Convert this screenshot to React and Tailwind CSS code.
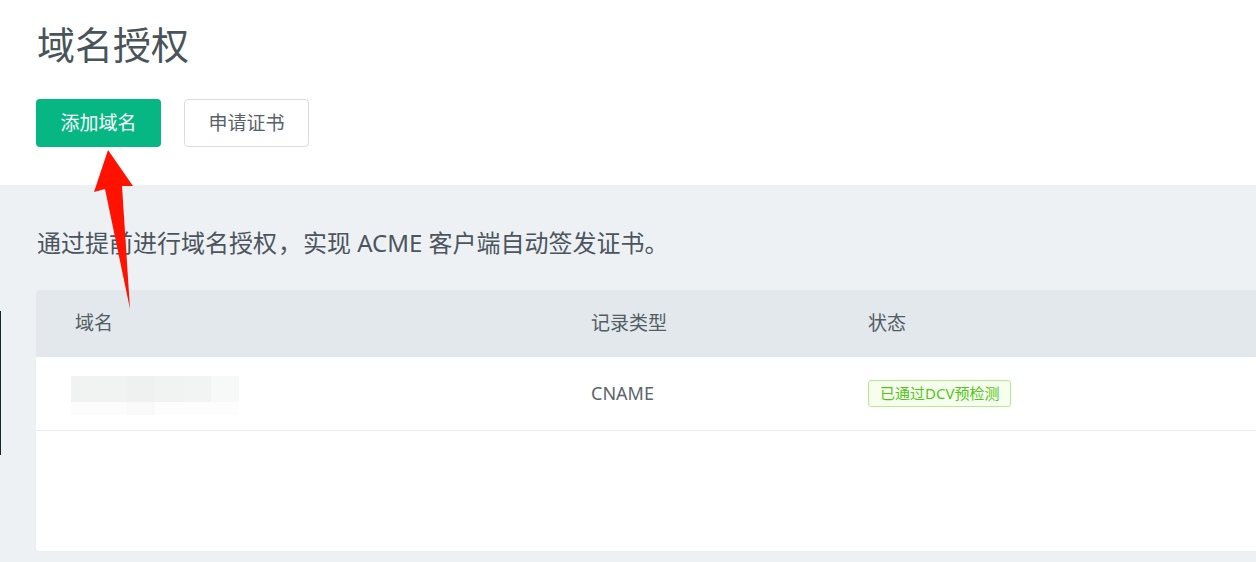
import React from 'react';

const font = "font-['Noto_Sans','Noto_Sans_CJK_SC',sans-serif]";

const BlurredDomain = () => (
  <div className="flex flex-col">
    <div className="flex h-[26px]">
      <div className="w-[56px] bg-[#f1f2f2]" />
      <div className="w-[28px] bg-[#eff1f1]" />
      <div className="w-[28px] bg-[#f1f2f2]" />
      <div className="w-[28px] bg-[#f2f3f3]" />
      <div className="w-[28px] bg-[#f7f8f8]" />
    </div>
    <div className="flex h-[13px]">
      <div className="w-[56px] bg-[#fcfcfc]" />
      <div className="w-[28px] bg-[#f9f9f9]" />
      <div className="w-[84px] bg-[#fdfdfd]" />
    </div>
  </div>
);

export default function App() {
  return (
    <div className={`relative w-full h-[562px] overflow-hidden bg-white ${font}`}>
      {/* Header */}
      <div className="px-[36px] pt-[25px] pb-[38px]">
        <h1 className="text-[38px] leading-none text-[#48545a] pl-px">域名授权</h1>
        <div className="flex gap-[23px] mt-[36px]">
          <button className="w-[125px] h-[48px] rounded-[4px] bg-[#07b783] text-white text-[19px]">添加域名</button>
          <button className="w-[125px] h-[48px] rounded-[4px] bg-white border border-[#d8dcdf] text-[#56616a] text-[19px]">申请证书</button>
        </div>
      </div>

      {/* Content */}
      <div className="bg-[#edf1f4] pl-[36px] pt-[43px] pb-[11px]">
        <p className="text-[24px] leading-[30px] text-[#4c555d] pl-px">
          通过提前进行域名授权<span className="inline-block w-[26px] text-center">，</span>实现 ACME 客户端自动签发证书。
        </p>

        <div className="mt-[32px] h-[261px] bg-white rounded-l-[4px] overflow-hidden">
          <div className="grid grid-cols-[516px_277px_1fr] h-[67px] bg-[#e3e8ec] items-center text-[19px] text-[#525d64]">
            <div className="pl-[39px]">域名</div>
            <div className="pl-[39px]">记录类型</div>
            <div className="pl-[39px]">状态</div>
          </div>
          <div className="grid grid-cols-[516px_277px_1fr] h-[74px] border-b border-[#ececec] items-center">
            <div className="pl-[35px] pt-[3px]"><BlurredDomain /></div>
            <div className="pl-[39px] text-[18px] text-[#5a656d]">CNAME</div>
            <div className="pl-[39px]">
              <span className="inline-flex items-center h-[27px] px-[11px] rounded-[3px] border border-[#b7eb8f] bg-[#f6ffed] text-[15px] text-[#52c41a]">已通过DCV预检测</span>
            </div>
          </div>
        </div>
      </div>

      {/* Left edge line */}
      <div className="absolute left-0 top-[311px] w-px h-[144px] bg-[#15272a]" />

      {/* Red annotation arrow */}
      <svg className="absolute left-0 top-0 pointer-events-none" width="200" height="320" viewBox="0 0 200 320">
        <polygon points="108,150 133,186 122,186 130,309 105,189 94,192" fill="#ff1200" />
      </svg>
    </div>
  );
}
